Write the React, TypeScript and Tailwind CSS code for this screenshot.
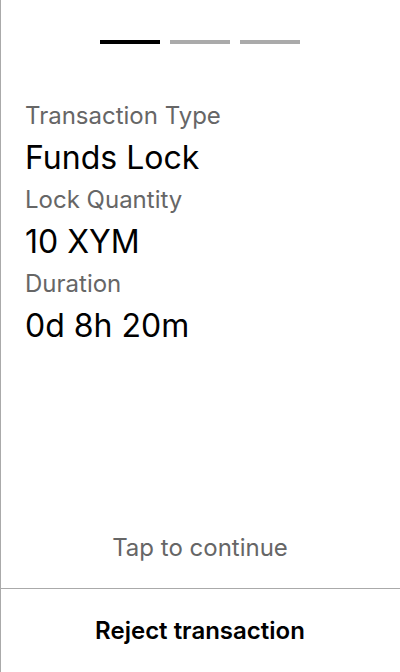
import React from "react";

export default function App() {
  const items = [
    { label: "Transaction Type", value: "Funds Lock" },
    { label: "Lock Quantity", value: "10 XYM" },
    { label: "Duration", value: "0d 8h 20m" },
  ];
  return (
    <div
      className="w-[400px] h-[672px] bg-white border-l border-[#aaaaaa] flex flex-col text-black"
      style={{ fontFamily: "Inter, 'Noto Sans', sans-serif" }}
    >
      <div className="flex justify-center gap-[10px] pt-[40px] pr-[1px]">
        <div className="w-[60px] h-[4px] bg-black" />
        <div className="w-[60px] h-[4px] bg-[#aaaaaa]" />
        <div className="w-[60px] h-[4px] bg-[#aaaaaa]" />
      </div>
      <div className="flex-1 flex flex-col px-[24px] pt-[54px]">
        {items.map((it) => (
          <div key={it.label} className="flex flex-col">
            <div className="text-[24px] leading-[36px] text-[#666666]">{it.label}</div>
            <div className="text-[32px] leading-[48px]">{it.value}</div>
          </div>
        ))}
      </div>
      <div className="text-center text-[24px] leading-[32px] text-[#666666] pb-[24px] pr-[1px]">
        Tap to continue
      </div>
      <div className="border-t border-[#aaaaaa] h-[84px] flex items-center justify-center pr-[1px]">
        <span className="text-[24px] leading-[32px] font-semibold">Reject transaction</span>
      </div>
    </div>
  );
}
